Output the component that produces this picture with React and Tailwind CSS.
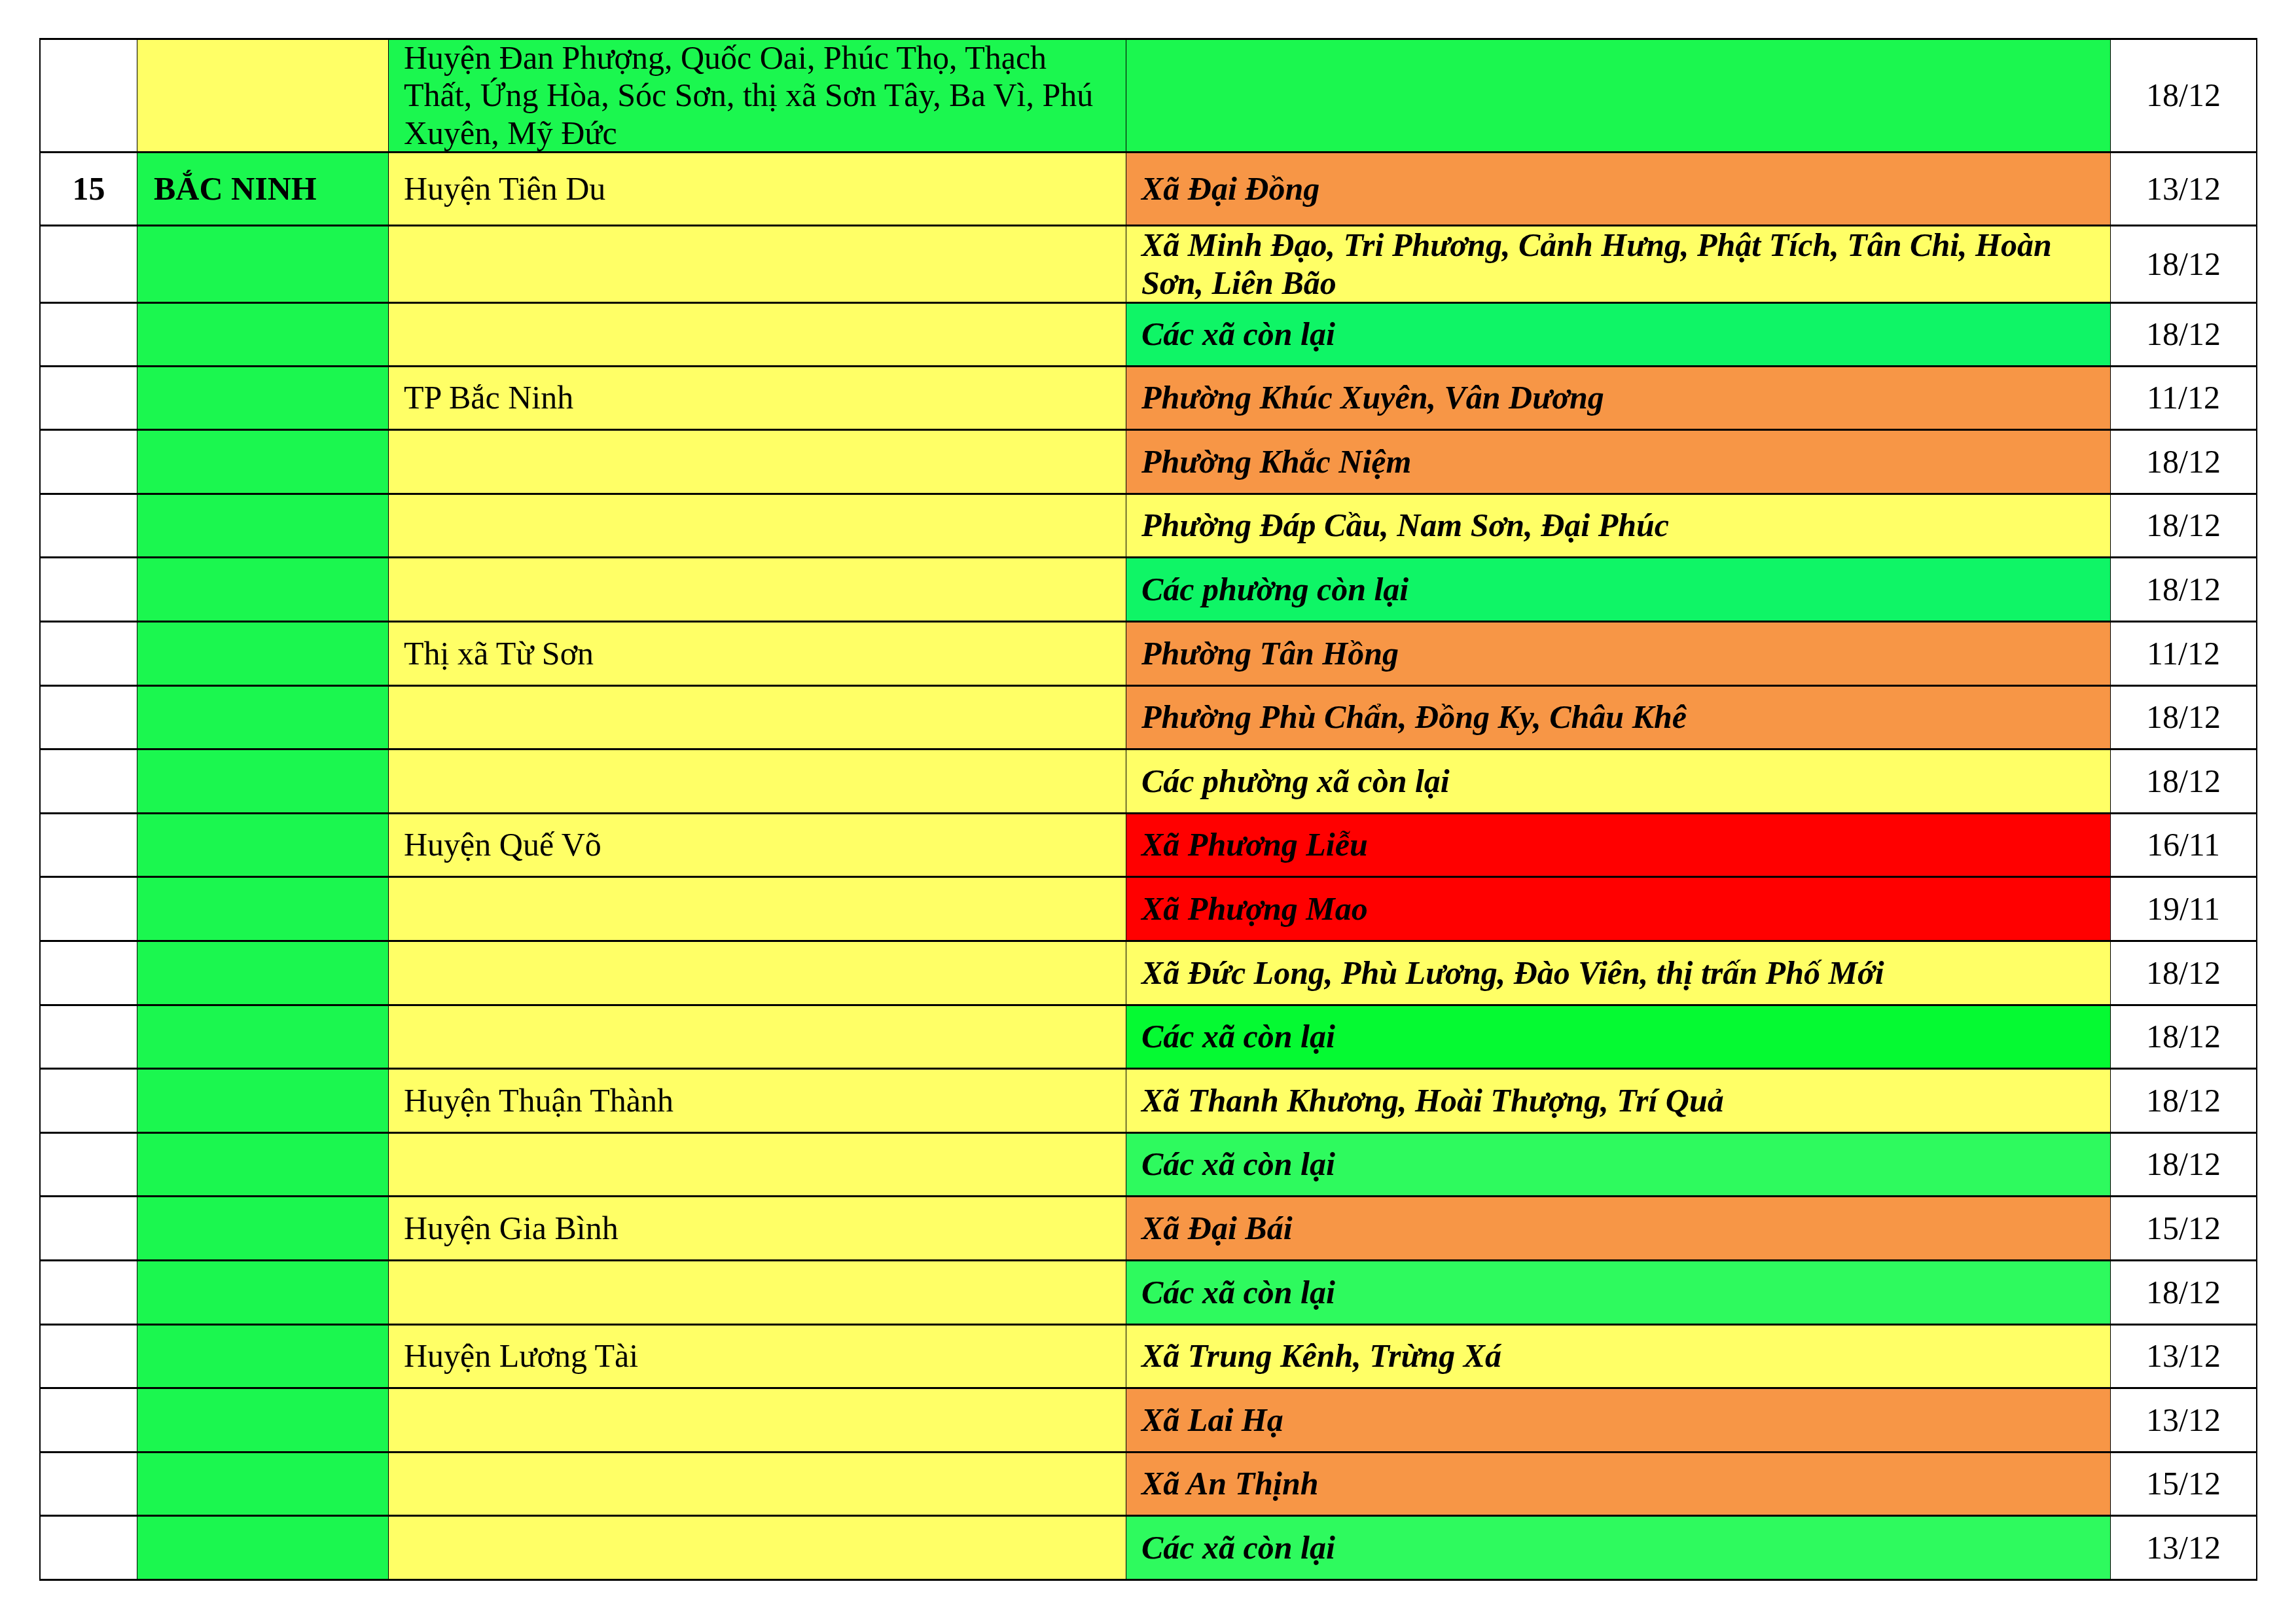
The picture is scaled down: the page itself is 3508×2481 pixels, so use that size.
import React from "react";

const YEL = "bg-[#ffff66]";
const GRN = "bg-[#1bf74f]";
const ORG = "bg-[#f79646]";
const RED = "bg-[#ff0000]";
const G1 = "bg-[#0ff566]";
const G2 = "bg-[#05fa32]";
const G3 = "bg-[#2efa5e]";

const rows = [
  { c3: "TP Bắc Ninh", c4: "Phường Khúc Xuyên, Vân Dương", bg: ORG, d: "11/12" },
  { c4: "Phường Khắc Niệm", bg: ORG, d: "18/12" },
  { c4: "Phường Đáp Cầu, Nam Sơn, Đại Phúc", bg: YEL, d: "18/12" },
  { c4: "Các phường còn lại", bg: G1, d: "18/12" },
  { c3: "Thị xã Từ Sơn", c4: "Phường Tân Hồng", bg: ORG, d: "11/12" },
  { c4: "Phường Phù Chẩn, Đồng Ky, Châu Khê", bg: ORG, d: "18/12" },
  { c4: "Các phường xã còn lại", bg: YEL, d: "18/12" },
  { c3: "Huyện Quế Võ", c4: "Xã Phương Liễu", bg: RED, d: "16/11" },
  { c4: "Xã Phượng Mao", bg: RED, d: "19/11" },
  { c4: "Xã Đức Long, Phù Lương, Đào Viên, thị trấn Phố Mới", bg: YEL, d: "18/12" },
  { c4: "Các xã còn lại", bg: G2, d: "18/12" },
  { c3: "Huyện Thuận Thành", c4: "Xã Thanh Khương, Hoài Thượng, Trí Quả", bg: YEL, d: "18/12" },
  { c4: "Các xã còn lại", bg: G3, d: "18/12" },
  { c3: "Huyện Gia Bình", c4: "Xã Đại Bái", bg: ORG, d: "15/12" },
  { c4: "Các xã còn lại", bg: G3, d: "18/12" },
  { c3: "Huyện Lương Tài", c4: "Xã Trung Kênh, Trừng Xá", bg: YEL, d: "13/12" },
  { c4: "Xã Lai Hạ", bg: ORG, d: "13/12" },
  { c4: "Xã An Thịnh", bg: ORG, d: "15/12" },
  { c4: "Các xã còn lại", bg: G3, d: "13/12" },
];

function Row({ h, c1, c2, c2bg, c3, c3bg, c4, c4bg, d }) {
  return (
    <div className={`flex border-b-[3px] border-black ${h}`}>
      <div className="w-[148px] shrink-0 border-r border-black bg-white flex items-center justify-center font-bold">
        {c1}
      </div>
      <div className={`w-[384px] shrink-0 border-r border-black ${c2bg} flex items-center pl-[25px] font-bold`}>
        {c2}
      </div>
      <div className={`w-[1127px] shrink-0 border-r border-black ${c3bg} flex items-center pl-[23px]`}>
        <div>{c3}</div>
      </div>
      <div className={`w-[1504px] shrink-0 border-r border-black ${c4bg} flex items-center pl-[23px] font-bold italic`}>
        <div>{c4}</div>
      </div>
      <div className="flex-1 bg-white flex items-center justify-center">{d}</div>
    </div>
  );
}

export default function App() {
  const base = 463;
  return (
    <div className="w-[3508px] h-[2481px] bg-white font-['Liberation_Serif','Times_New_Roman',serif] text-[50px] leading-[1.15] text-black">
      <div className="pt-[58px] pl-[60px]">
        <div className="w-[3389px] border-t-[3px] border-l-2 border-r-2 border-black">
          <Row
            h="h-[173px]"
            c2bg={YEL}
            c3={
              <>
                Huyện Đan Phượng, Quốc Oai, Phúc Thọ, Thạch
                <br />
                Thất, Ứng Hòa, Sóc Sơn, thị xã Sơn Tây, Ba Vì, Phú
                <br />
                Xuyên, Mỹ Đức
              </>
            }
            c3bg={GRN}
            c4bg={GRN}
            d="18/12"
          />
          <Row
            h="h-[112px]"
            c1="15"
            c2="BẮC NINH"
            c2bg={GRN}
            c3="Huyện Tiên Du"
            c3bg={YEL}
            c4="Xã Đại Đồng"
            c4bg={ORG}
            d="13/12"
          />
          <Row
            h="h-[118px]"
            c2bg={GRN}
            c3bg={YEL}
            c4={
              <>
                Xã Minh Đạo, Tri Phương, Cảnh Hưng, Phật Tích, Tân Chi, Hoàn
                <br />
                Sơn, Liên Bão
              </>
            }
            c4bg={YEL}
            d="18/12"
          />
          <Row h="h-[97px]" c2bg={GRN} c3bg={YEL} c4="Các xã còn lại" c4bg={G1} d="18/12" />
          {rows.map((r, i) => {
            const top = Math.round(base + 97.6 * (i + 1));
            const bot = Math.round(base + 97.6 * (i + 2));
            const h = bot - top === 98 ? "h-[98px]" : "h-[97px]";
            return (
              <Row
                key={i}
                h={h}
                c2bg={GRN}
                c3={r.c3}
                c3bg={YEL}
                c4={r.c4}
                c4bg={r.bg}
                d={r.d}
              />
            );
          })}
        </div>
      </div>
    </div>
  );
}
